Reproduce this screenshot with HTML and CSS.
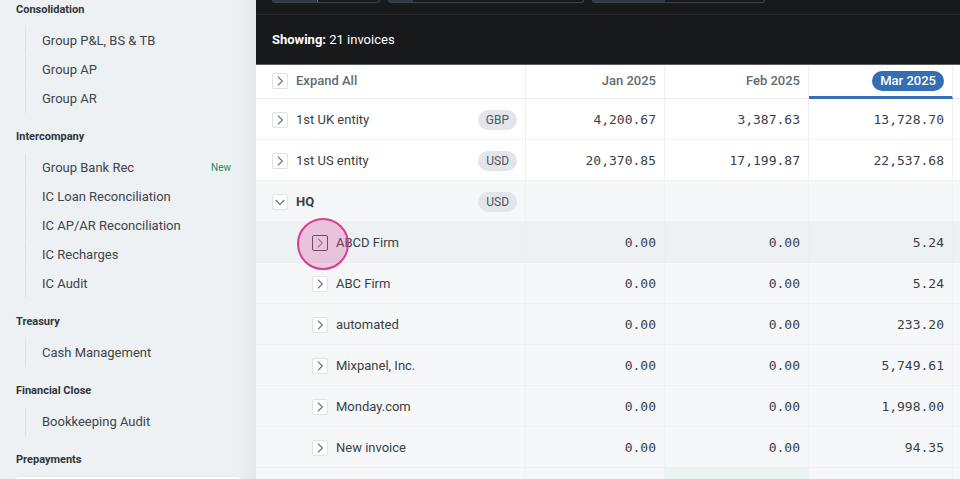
FILE: index.html
```html
<!DOCTYPE html>
<html lang="en">
<head>
<meta charset="utf-8">
<meta name="viewport" content="width=device-width, initial-scale=1">
<title>Group AP</title>
<link rel="stylesheet" href="styles.css">
</head>
<body>

<!-- chevron shared by all the expand buttons -->
<svg class="defs" width="0" height="0" aria-hidden="true">
  <symbol id="chevron" viewBox="0 0 14 14">
    <path d="M5 2.7 L9.3 7 L5 11.3" fill="none" stroke="currentColor" stroke-width="1.2"/>
  </symbol>
</svg>

<div class="app">
  <nav class="sidebar">
    <section>
      <h2>Consolidation</h2>
      <ul>
        <li><a href="#">Group P&amp;L, BS &amp; TB</a></li>
        <li><a href="#">Group AP</a></li>
        <li><a href="#">Group AR</a></li>
      </ul>
    </section>
    <section>
      <h2>Intercompany</h2>
      <ul>
        <li><a href="#">Group Bank Rec <span class="new">New</span></a></li>
        <li><a href="#">IC Loan Reconciliation</a></li>
        <li><a href="#">IC AP/AR Reconciliation</a></li>
        <li><a href="#">IC Recharges</a></li>
        <li><a href="#">IC Audit</a></li>
      </ul>
    </section>
    <section>
      <h2>Treasury</h2>
      <ul>
        <li><a href="#">Cash Management</a></li>
      </ul>
    </section>
    <section>
      <h2>Financial Close</h2>
      <ul>
        <li><a href="#">Bookkeeping Audit</a></li>
      </ul>
    </section>
    <section>
      <h2>Prepayments</h2>
      <div class="card"></div>
    </section>
  </nav>

  <main class="content">
    <header class="topbar">
      <div class="filters">
        <div class="filter filter-sm"><span></span></div>
        <div class="filter filter-lg"><span></span></div>
        <div class="filter filter-md"><span></span></div>
      </div>
      <p class="showing"><b>Showing:</b> 21 invoices</p>
    </header>

    <table>
      <colgroup>
        <col class="col-name">
        <col class="col-first">
        <col class="col-month">
        <col class="col-month">
        <col>
      </colgroup>
      <thead>
        <tr>
          <th><div class="name"><button type="button" class="toggle" aria-label="Expand all"><svg><use href="#chevron"/></svg></button>Expand All</div></th>
          <th class="num">Jan 2025</th>
          <th class="num">Feb 2025</th>
          <th class="num current"><span class="pill">Mar 2025</span></th>
          <th></th>
        </tr>
      </thead>
      <tbody>
        <tr>
          <td><div class="name"><button type="button" class="toggle" aria-label="Expand"><svg><use href="#chevron"/></svg></button>1st UK entity<span class="currency">GBP</span></div></td>
          <td class="num">4,200.67</td>
          <td class="num">3,387.63</td>
          <td class="num">13,728.70</td>
          <td></td>
        </tr>
        <tr>
          <td><div class="name"><button type="button" class="toggle" aria-label="Expand"><svg><use href="#chevron"/></svg></button>1st US entity<span class="currency">USD</span></div></td>
          <td class="num">20,370.85</td>
          <td class="num">17,199.87</td>
          <td class="num">22,537.68</td>
          <td></td>
        </tr>
        <tr class="open">
          <td><div class="name"><button type="button" class="toggle down" aria-label="Collapse"><svg><use href="#chevron"/></svg></button><b>HQ</b><span class="currency">USD</span></div></td>
          <td></td>
          <td></td>
          <td></td>
          <td></td>
        </tr>
        <tr class="child hover">
          <td><div class="name"><button type="button" class="toggle" aria-label="Expand"><svg><use href="#chevron"/></svg><span class="click"></span></button>ABCD Firm</div></td>
          <td class="num">0.00</td>
          <td class="num">0.00</td>
          <td class="num">5.24</td>
          <td></td>
        </tr>
        <tr class="child">
          <td><div class="name"><button type="button" class="toggle" aria-label="Expand"><svg><use href="#chevron"/></svg></button>ABC Firm</div></td>
          <td class="num">0.00</td>
          <td class="num">0.00</td>
          <td class="num">5.24</td>
          <td></td>
        </tr>
        <tr class="child">
          <td><div class="name"><button type="button" class="toggle" aria-label="Expand"><svg><use href="#chevron"/></svg></button>automated</div></td>
          <td class="num">0.00</td>
          <td class="num">0.00</td>
          <td class="num">233.20</td>
          <td></td>
        </tr>
        <tr class="child">
          <td><div class="name"><button type="button" class="toggle" aria-label="Expand"><svg><use href="#chevron"/></svg></button>Mixpanel, Inc.</div></td>
          <td class="num">0.00</td>
          <td class="num">0.00</td>
          <td class="num">5,749.61</td>
          <td></td>
        </tr>
        <tr class="child">
          <td><div class="name"><button type="button" class="toggle" aria-label="Expand"><svg><use href="#chevron"/></svg></button>Monday.com</div></td>
          <td class="num">0.00</td>
          <td class="num">0.00</td>
          <td class="num">1,998.00</td>
          <td></td>
        </tr>
        <tr class="child">
          <td><div class="name"><button type="button" class="toggle" aria-label="Expand"><svg><use href="#chevron"/></svg></button>New invoice</div></td>
          <td class="num">0.00</td>
          <td class="num">0.00</td>
          <td class="num">94.35</td>
          <td></td>
        </tr>
        <tr class="child">
          <td></td>
          <td></td>
          <td class="paid"></td>
          <td></td>
          <td></td>
        </tr>
      </tbody>
    </table>
  </main>
</div>

</body>
</html>
```

FILE: styles.css
```css
* { box-sizing: border-box; }

body {
    margin: 0;
    font-family: Roboto, Arial, sans-serif;
    font-size: 13px;
    line-height: 20px;
    color: #3a3f44;
    background: #fff;
}

.defs { position: absolute; }

.app {
    display: flex;
    height: 100vh;
    overflow: hidden;
}

/* Sidebar */
.sidebar {
    flex: none;
    width: 256px;
    padding: 2px 15px 0;
    background: linear-gradient(to right, #edf1f4 238px, #e3e7ea 256px);
    overflow: hidden;
}

.sidebar section { margin-bottom: 16px; }

.sidebar h2 {
    margin: 0 0 9px 1px;
    font-size: 11px;
    font-weight: 700;
    line-height: 16px;
    color: #30353a;
}

.sidebar ul {
    margin: 0;
    padding: 0 0 0 10px;
    list-style: none;
}

.sidebar li {
    margin-bottom: 1px;
    border-left: 1px solid #dce1e5;
}

.sidebar a {
    display: flex;
    align-items: center;
    justify-content: space-between;
    height: 28px;
    padding: 0 8px 0 16px;
    color: #3f4449;
    text-decoration: none;
}

.new {
    padding: 0 2px;
    font-size: 10px;
    line-height: 16px;
    color: #2f8562;
    background: #ebf3f2;
}

.card {
    height: 36px;
    border-radius: 4px;
    background: #fff;
    box-shadow: 0 0 3px #d5dade;
}

/* Top bar */
.content {
    flex: 1;
    min-width: 0;
    overflow: hidden;
}

.topbar {
    color: #fff;
    background: #18191b;
    border-bottom: 1px solid #5b5c5e;
}

.filters {
    display: flex;
    gap: 8px;
    height: 15px;
    padding: 0 16px;
    border-bottom: 1px solid #2a2b2e;
}

.filter {
    display: flex;
    height: 3px;
    border: 1px solid #3f454c;
    border-top: none;
    border-radius: 0 0 3px 3px;
}

.filter span { background: #343a42; }
.filter-sm { width: 108px; }
.filter-sm span { width: 45px; border-right: 1px solid #6b7076; }
.filter-lg { width: 196px; }
.filter-lg span { width: 24px; }
.filter-md { width: 173px; }
.filter-md span { width: 72px; }

.showing {
    margin: 0;
    padding: 15px 16px 14px;
}

/* Table */
table {
    width: 100%;
    table-layout: fixed;
    border-collapse: separate;
    border-spacing: 0;
}

.col-name { width: 270px; }
.col-first { width: 139px; }
.col-month { width: 144px; }

th, td {
    height: 41px;
    padding: 2px 8px 0 16px;
    text-align: left;
    border-right: 1px solid #eceff3;
    border-bottom: 1px solid #f0f1f5;
}

th {
    height: 34px;
    padding-top: 0;
    padding-bottom: 2px;
    font-weight: 500;
    color: #646a71;
    border-bottom: 1px solid #eaecf3;
}

th:last-child, td:last-child {
    padding: 0;
    border-right: none;
}

.num { text-align: right; }

td.num {
    font-family: "DejaVu Sans Mono", monospace;
    font-size: 13px;
}

th.current {
    padding-bottom: 0;
    border-bottom: 3px solid #346eb4;
}

.pill {
    display: inline-block;
    padding: 0 8px;
    border-radius: 10px;
    color: #fff;
    background: #346eb4;
}

.name {
    display: flex;
    align-items: center;
    gap: 8px;
}

.toggle {
    position: relative;
    flex: none;
    width: 16px;
    height: 16px;
    padding: 0;
    border: 1px solid #dfe3e8;
    border-radius: 2px;
    color: #6c7279;
    background: #fff;
    cursor: pointer;
}

.toggle svg {
    display: block;
    width: 14px;
    height: 14px;
}

.toggle.down svg { transform: rotate(90deg); }

.currency {
    margin-left: auto;
    padding: 0 8px;
    border-radius: 10px;
    font-size: 12px;
    color: #50565c;
    background: #e2e6eb;
}

.open td, .child td {
    background: #f5f7f9;
    border-color: #eff1f4;
}

.child td:first-child { padding-left: 56px; }

.hover td {
    background: #edf1f4;
    border-color: #eaeef2;
}

.hover .toggle {
    color: #8a8f96;
    border-color: #4c4f54;
    background: transparent;
}

.child td.paid { background: #eaf4f0; }

/* click highlight over the button */
.click {
    position: absolute;
    top: -18px;
    left: -16px;
    width: 52px;
    height: 52px;
    border: 2px solid #db3a8e;
    border-radius: 50%;
    background: rgba(219, 58, 142, 0.25);
}
```
